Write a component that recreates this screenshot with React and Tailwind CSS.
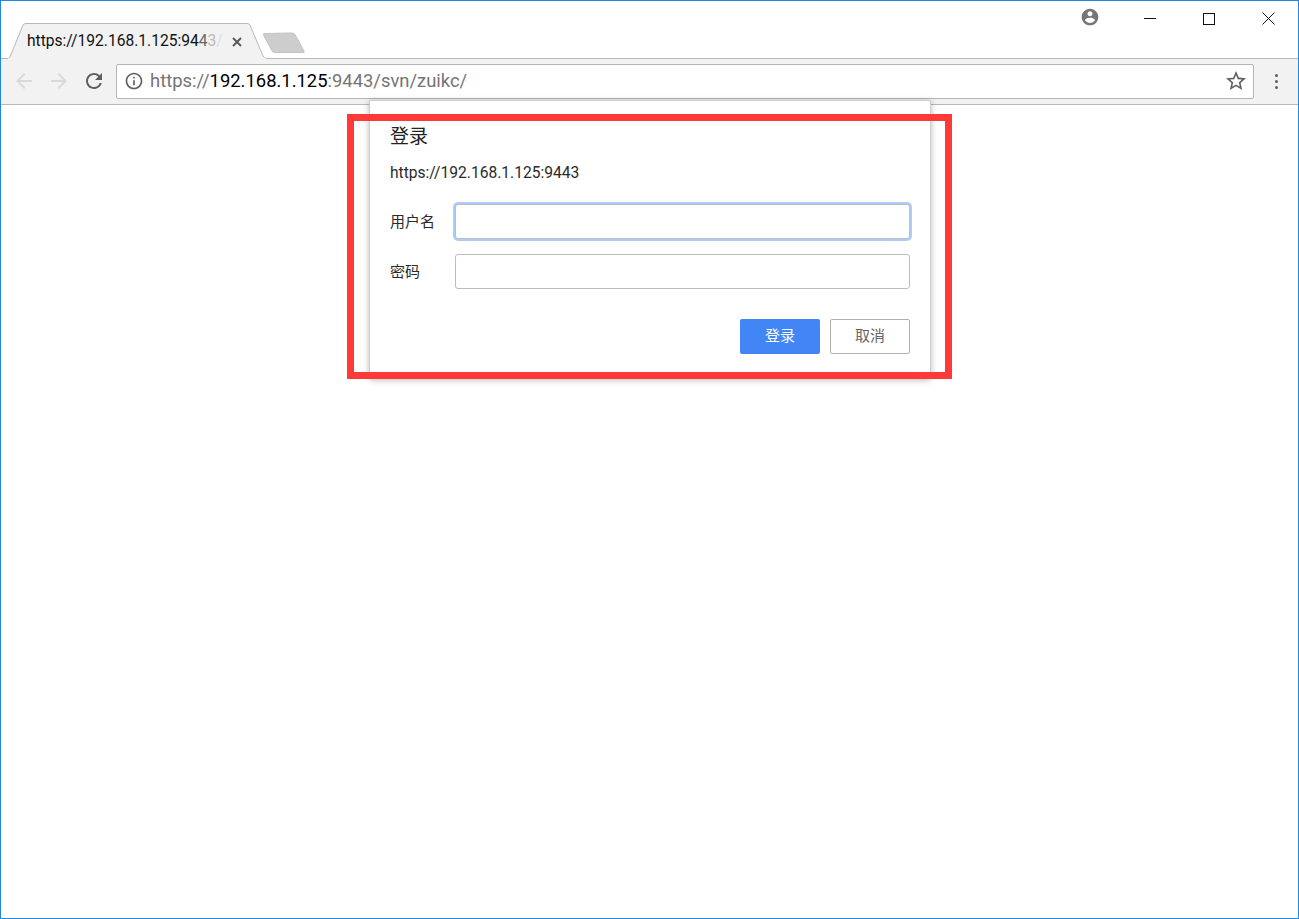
const FONT = "font-['Roboto','Noto_Sans_CJK_SC',sans-serif]";

function Icon({ d, size = 24, className = "" }) {
  return (
    <svg width={size} height={size} viewBox="0 0 24 24" fill="currentColor" className={`block shrink-0 ${className}`}>
      <path d={d} />
    </svg>
  );
}

const ARROW_BACK = "M20 11H7.83l5.59-5.59L12 4l-8 8 8 8 1.41-1.41L7.83 13H20v-2z";
const ARROW_FWD = "M4 11h12.17l-5.59-5.59L12 4l8 8-8 8-1.41-1.41L16.17 13H4v-2z";
const RELOAD = "M17.65 6.35A7.958 7.958 0 0 0 12 4c-4.42 0-7.99 3.58-7.99 8s3.57 8 7.99 8c3.73 0 6.84-2.55 7.73-6h-2.08A5.99 5.99 0 0 1 12 18c-3.31 0-6-2.69-6-6s2.69-6 6-6c1.66 0 3.14.69 4.22 1.78L13 11h7V4l-2.35 2.35z";
const INFO = "M11 7h2v2h-2zm0 4h2v6h-2zm1-9C6.48 2 2 6.48 2 12s4.48 10 10 10 10-4.48 10-10S17.52 2 12 2zm0 18c-4.41 0-8-3.59-8-8s3.59-8 8-8 8 3.59 8 8-3.59 8-8 8z";
const STAR = "M22 9.24l-7.19-.62L12 2 9.19 8.63 2 9.24l5.46 4.73L5.82 21 12 17.27 18.18 21l-1.63-7.03L22 9.24zM12 15.4l-3.76 2.27 1-4.28-3.32-2.88 4.38-.38L12 6.1l1.71 4.04 4.38.38-3.32 2.88 1 4.28L12 15.4z";
const ACCOUNT = "M12 2C6.48 2 2 6.48 2 12s4.48 10 10 10 10-4.48 10-10S17.52 2 12 2zm0 3c1.66 0 3 1.34 3 3s-1.34 3-3 3-3-1.34-3-3 1.34-3 3-3zm0 14.2c-2.5 0-4.71-1.28-6-3.22.03-1.99 4-3.08 6-3.08 1.99 0 5.97 1.09 6 3.08-1.29 1.94-3.5 3.22-6 3.22z";

function TabStrip() {
  return (
    <div className="relative h-[58px] shrink-0 bg-white">
      <div className="absolute left-0 right-0 bottom-0 h-px bg-[#b8b8b8]" />
      <div className="absolute left-[6px] top-[22px] h-[36px] w-[260px]">
        <svg width="260" height="36" viewBox="0 0 260 36" className="absolute inset-0">
          <path d="M0.5 36 L3 34 L16 2 Q17 0.5 19 0.5 L240 0.5 Q242 0.5 243 2 L256 33 Q257 35 260 35.5 L260 36 Z" fill="#f2f2f2" stroke="#b8b8b8" strokeWidth="1" />
          <rect x="1" y="35" width="258" height="1.5" fill="#f2f2f2" />
        </svg>
        <div className="relative flex h-full items-center pl-[20px] pt-px">
          <span className="w-[198px] whitespace-nowrap text-[15.6px] leading-none text-[#111]">
            https://192.168.1.125:94<span className="text-[#666]">4</span><span className="text-[#bbb]">3</span><span className="text-[#ddd]">/</span>
          </span>
          <svg width="10" height="10" viewBox="0 0 10 10" className="ml-[7px] block">
            <path d="M1 1L9 9M9 1L1 9" stroke="#555" strokeWidth="1.8" />
          </svg>
        </div>
      </div>
      <svg width="44" height="22" viewBox="0 0 44 22" className="absolute left-[261px] top-[31px]">
        <path d="M2 1.5 Q1 1.5 1.5 3 L10 19 Q11 20.5 13 20.5 L41 20.5 Q43 20.5 42 19 L33 2.5 Q32.5 1 30 1 Z" fill="#cdcdcd" stroke="#c4c4c4" />
      </svg>
      <div className="absolute right-0 top-0 flex items-center">
        <Icon d={ACCOUNT} size={20} className="mr-[20px] -mt-[2px] text-[#757575]" />
        <div className="flex h-[34px] w-[60px] items-center justify-center">
          <div className="h-px w-[12px] bg-[#111]" />
        </div>
        <div className="flex h-[34px] w-[58px] items-center justify-center">
          <div className="mt-px h-[12px] w-[12px] border border-[#111]" />
        </div>
        <div className="flex h-[34px] w-[60px] items-center justify-center">
          <svg width="13" height="13" viewBox="0 0 13 13" className="block"><path d="M0.5 0.5L12.5 12.5M12.5 0.5L0.5 12.5" stroke="#111" strokeWidth="1" /></svg>
        </div>
      </div>
    </div>
  );
}

function Toolbar() {
  return (
    <div className="flex h-[46px] shrink-0 items-center border-b border-[#b8b8b8] bg-[#f2f2f2] pl-[11px] pb-px">
      <Icon d={ARROW_BACK} className="text-[#d9d9d9]" />
      <Icon d={ARROW_FWD} className="ml-[11px] text-[#d9d9d9]" />
      <Icon d={RELOAD} className="ml-[11px] text-[#5f5f5f]" />
      <div className="ml-[10px] flex h-[35px] w-[1138px] items-center rounded-[2px] border border-[#b5b5b5] bg-white">
        <Icon d={INFO} size={20} className="ml-[7px] text-[#5f5f5f]" />
        <span className="ml-[6px] pt-px text-[18.4px] leading-none whitespace-nowrap text-[#757575]">
          https://<span className="text-black">192.168.1.125</span>:9443/svn/zuikc/
        </span>
        <Icon d={STAR} className="ml-auto mr-[5px] text-[#5f5f5f]" />
      </div>
      <div className="ml-[21px] flex flex-col gap-[3px]">
        <div className="h-[3px] w-[3px] rounded-full bg-[#5f5f5f]" />
        <div className="h-[3px] w-[3px] rounded-full bg-[#5f5f5f]" />
        <div className="h-[3px] w-[3px] rounded-full bg-[#5f5f5f]" />
      </div>
    </div>
  );
}

function Row({ label, focused, className = "" }) {
  return (
    <div className={`flex items-center ${className}`}>
      <span className="w-[65px] shrink-0 pt-px text-[15px] leading-none text-[#2a2a2a]">{label}</span>
      <div className={`h-[35px] flex-1 rounded-[3px] border border-[#bdbdbd] bg-white ${focused ? "ring-2 ring-[#aecbfa]" : ""}`} />
    </div>
  );
}

function Dialog() {
  return (
    <div className="absolute left-[368px] top-[99px] z-10 h-[279px] w-[562px] rounded-[2px] border border-[#cfcfcf] border-b-0 bg-white px-[20px] shadow-[0_1px_6px_rgba(0,0,0,0.28)]">
      <div className="mt-[25px] text-[19px] leading-[22px] text-[#222]">登录</div>
      <div className="mt-[15px] text-[15.6px] leading-[20px] text-[#2a2a2a]">https://192.168.1.125:9443</div>
      <Row label="用户名" focused className="mt-[21px]" />
      <Row label="密码" className="mt-[15px]" />
      <div className="mt-[30px] flex justify-end gap-[10px]">
        <div className="flex h-[35px] w-[80px] items-center justify-center rounded-[2px] bg-[#4285f4] text-[15px] text-white">登录</div>
        <div className="flex h-[35px] w-[80px] items-center justify-center rounded-[2px] border border-[#b0b0b0] bg-white text-[15px] text-[#666]">取消</div>
      </div>
    </div>
  );
}

export default function App() {
  return (
    <div className={`relative flex h-[919px] w-[1299px] flex-col overflow-hidden border border-[#1e88e5] bg-white ${FONT}`}>
      <TabStrip />
      <Toolbar />
      <div className="flex-1 bg-white" />
      <Dialog />
      <div className="absolute left-[346px] top-[113px] z-20 h-[265px] w-[605px] border-[7px] border-[#ff3838]" />
    </div>
  );
}
